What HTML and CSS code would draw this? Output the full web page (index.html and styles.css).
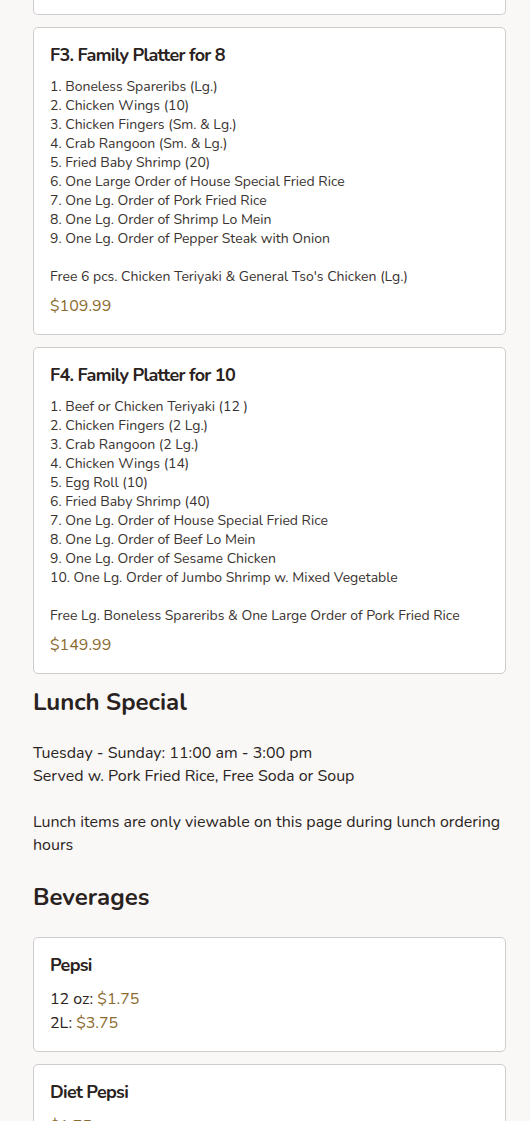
FILE: index.html
```html
<!DOCTYPE html>
<html lang="en">
  <head>
    <meta charset="UTF-8" />
    <meta name="viewport" content="width=device-width, initial-scale=1.0" />
    <title>Menu</title>
    <link rel="stylesheet" href="styles.css">
  </head>
  <body>
    <main class="menu">
      <!-- tail of the previous platter card -->
      <div class="card card-cut"></div>

      <div class="card">
        <h3 class="item-name">F3. Family Platter for 8</h3>
        <p class="item-desc">1. Boneless Spareribs (Lg.)
2. Chicken Wings (10)
3. Chicken Fingers (Sm. &amp; Lg.)
4. Crab Rangoon (Sm. &amp; Lg.)
5. Fried Baby Shrimp (20)
6. One Large Order of House Special Fried Rice
7. One Lg. Order of Pork Fried Rice
8. One Lg. Order of Shrimp Lo Mein
9. One Lg. Order of Pepper Steak with Onion

Free 6 pcs. Chicken Teriyaki &amp; General Tso's Chicken (Lg.)</p>
        <p class="price">$109.99</p>
      </div>

      <div class="card">
        <h3 class="item-name">F4. Family Platter for 10</h3>
        <p class="item-desc">1. Beef or Chicken Teriyaki (12 )
2. Chicken Fingers (2 Lg.)
3. Crab Rangoon (2 Lg.)
4. Chicken Wings (14)
5. Egg Roll (10)
6. Fried Baby Shrimp (40)
7. One Lg. Order of House Special Fried Rice
8. One Lg. Order of Beef Lo Mein
9. One Lg. Order of Sesame Chicken
10. One Lg. Order of Jumbo Shrimp w. Mixed Vegetable

Free Lg. Boneless Spareribs &amp; One Large Order of Pork Fried Rice</p>
        <p class="price">$149.99</p>
      </div>

      <section class="category">
        <h2 class="category-title">Lunch Special</h2>
        <p class="category-note">Tuesday - Sunday: 11:00 am - 3:00 pm
Served w. Pork Fried Rice, Free Soda or Soup

Lunch items are only viewable on this page during lunch ordering hours</p>
      </section>

      <section class="category">
        <h2 class="category-title">Beverages</h2>
      </section>

      <div class="card">
        <h3 class="item-name">Pepsi</h3>
        <div class="sizes">
          <div>12 oz: <span class="size-price">$1.75</span></div>
          <div>2L: <span class="size-price">$3.75</span></div>
        </div>
      </div>

      <div class="card">
        <h3 class="item-name">Diet Pepsi</h3>
        <div class="sizes">
          <div><span class="size-price">$1.75</span></div>
        </div>
      </div>
    </main>
  </body>
</html>
```

FILE: styles.css
```css
html,
body {
  margin: 0;
  padding: 0;
  overflow: hidden;
}

body {
  font-family: "Nunito", "Lato", "Noto Sans", sans-serif;
  background: #f9f8f7;
  color: #2b2421;
}

.menu {
  display: flex;
  flex-direction: column;
  gap: 12px;
  padding: 0 24px 40px 33px;
}

.card {
  background: #fff;
  border: 1px solid #cfcccb;
  border-radius: 5px;
  padding: 17px 16px 16px;
}

/* only the bottom edge of this card is on screen */
.card-cut {
  height: 14px;
  padding: 0;
  border-top: none;
  border-top-left-radius: 0;
  border-top-right-radius: 0;
}

.item-name {
  margin: 0 0 12px;
  font-size: 18px;
  line-height: 20px;
  font-weight: 700;
  letter-spacing: -0.7px;
  color: #2a2220;
}

.item-desc {
  margin: 0;
  font-size: 14px;
  line-height: 19px;
  color: #3a3330;
  white-space: pre-line;
}

.price {
  margin: 8px 0 0;
  font-size: 16px;
  line-height: 24px;
  color: #8b6b30;
}

.sizes {
  margin-top: 2px;
  font-size: 16px;
  line-height: 24px;
  color: #2b2421;
}

.size-price {
  color: #8b6b30;
}

.category-title {
  margin: 1px 0 25px;
  font-size: 24px;
  line-height: 30px;
  font-weight: 700;
  color: #2a2220;
}

.category-note {
  margin: 0 0 12px;
  font-size: 16px;
  line-height: 23px;
  white-space: pre-line;
}

.category + .category .category-title {
  margin-bottom: 13px;
}
```
